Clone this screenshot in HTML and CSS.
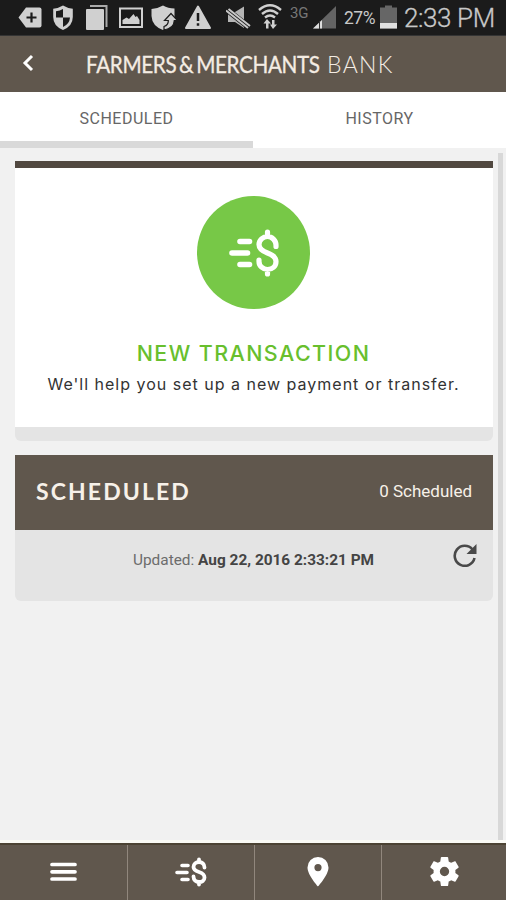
FILE: index.html
```html
<!DOCTYPE html>
<html lang="en">
<head>
<meta charset="utf-8">
<title>Farmers &amp; Merchants Bank</title>
<link rel="stylesheet" href="styles.css">
</head>
<body>
<svg class="defs" width="0" height="0" aria-hidden="true">
  <symbol id="transfer" viewBox="0 0 50 48">
    <g fill="none" stroke="currentColor" stroke-linecap="round" stroke-linejoin="round">
      <path stroke-width="5.600" d="M11 12.500H20.500M3 24H18.500M11 35.500H20.500"/>
      <path stroke-width="5.200" d="M47 17.500V16C47 11.500 43 7.500 38.500 7.500S30 11.200 30 15.500C30 20 33 22 38.500 24S47 28.500 47 32.500C47 37.500 43 40.500 38.500 40.500S30 37 30 32.500V31M38.500 3V7.500M38.500 40.500V45"/>
    </g>
  </symbol>
</svg>
<header class="status">
  <svg class="st tag" width="24" height="36" viewBox="0 0 24 36"><path fill="#d0d0d0" d="M8 7.500H21.500Q23.500 7.500 23.500 9.500V25.500Q23.500 27.500 21.500 27.500H8L.5 17.500Z"/><path stroke="#1b1b1b" stroke-width="2.200" d="M8.500 17.500H18.500M13.500 12.500V22.500"/></svg>
  <svg class="st shield" width="20" height="36" viewBox="0 0 20 36"><path fill="#d0d0d0" d="M10 5.500Q15 8.500 19.800 8.700V17Q19.800 26 10 30Q.2 26 .2 17V8.700Q5 8.500 10 5.500Z"/><path fill="#1b1b1b" d="M10 9V17.500H3V11.300Q7 11 10 9ZM10 17.500H17Q16.500 24 10 27Z"/></svg>
  <svg class="st pages" width="22" height="36" viewBox="0 0 22 36"><path fill="none" stroke="#aaa" stroke-width="2" d="M4 6H20.500V27"/><rect y="9" width="18" height="21" rx="1" fill="#d0d0d0"/></svg>
  <svg class="st photo" width="24" height="36" viewBox="0 0 24 36"><rect x="1" y="8.500" width="22" height="18.500" fill="none" stroke="#d0d0d0" stroke-width="2"/><path fill="#d0d0d0" d="M3.500 24V20L7.500 17.500L10 19L14.500 14L16.500 17L18 16L20.500 20V24Z"/></svg>
  <svg class="st guard" width="27" height="36" viewBox="0 0 27 36"><path fill="#d0d0d0" d="M12 5.500Q17 8.500 23.500 8.500V17Q22 26 12 30Q1 26 .5 16V9Q7 8.500 12 5.500Z"/><path fill="#d0d0d0" stroke="#1b1b1b" stroke-width="1.200" d="M20 13.500L26.500 20.500H23.300Q23 28.500 13 30V26.500Q17.500 25 17.300 20.500H13.500Z"/></svg>
  <svg class="st alert" width="26" height="36" viewBox="0 0 26 36"><path fill="#d0d0d0" stroke="#d0d0d0" stroke-linejoin="round" stroke-width="2" d="M13 6.500L25 28H1Z"/><path stroke="#1b1b1b" stroke-width="2.500" d="M13 13V21M13 23.300V25.800"/></svg>
  <svg class="st mute" width="25" height="36" viewBox="0 0 25 36"><path fill="#b5b5b5" d="M2 12H9L18 6.500V28L9 22H2Z"/><path stroke="#1b1b1b" stroke-width="6" d="M0 9L24 28"/><path stroke="#c8c8c8" stroke-width="2" d="M0 10.500L22 28M2.500 9L24 26"/></svg>
  <svg class="st wifi" width="24" height="36" viewBox="0 0 24 36"><g fill="none" stroke="#d0d0d0" stroke-width="2.400"><path d="M1 10Q12 .5 23 10M4 14Q12 7 20 14M7 17.500Q12 13.500 17 17.500"/></g><path fill="#d0d0d0" d="M9 19L13 23.500H10.500V28.500H8V23.500H5.500ZM14 20H16.500V24.500H19L15 29L12 24.500H14Z"/></svg>
  <span class="net">3G</span>
  <svg class="st bars" width="23" height="36" viewBox="0 0 23 36"><path fill="#646464" d="M23 6V28.500H0Z"/><path fill="#ddd" d="M9 20V28.500H0Z"/><path stroke="#333" d="M6.500 21V29"/></svg>
  <span class="pct">27%</span>
  <svg class="st batt" width="17" height="36" viewBox="0 0 17 36"><path fill="#666" d="M5 5.500H12V7.500H17V28.500H0V7.500H5Z"/><path fill="#e0e0e0" d="M0 23H17V28.500H0Z"/></svg>
  <span class="clock">2:33 PM</span>
</header>
<nav class="brand">
  <svg class="back" width="12" height="18" viewBox="0 0 12 18"><path d="M10 2L3 9L10 16" fill="none" stroke="#fff" stroke-width="3"/></svg>
  <div class="logo"><span class="name">FARMERS<i>&amp;</i>MERCHANTS</span><span class="bank">BANK</span></div>
</nav>
<div class="tabs"><div class="tab on">SCHEDULED</div><div class="tab">HISTORY</div></div>
<main>
  <div class="content">
    <section class="new">
      <div class="disc"><svg width="50" height="48"><use href="#transfer"/></svg></div>
      <h2>NEW TRANSACTION</h2>
      <p>We'll help you set up a new payment or transfer.</p>
    </section>
    <section class="list">
      <div class="head"><h3>SCHEDULED</h3><span class="count">0 Scheduled</span></div>
      <div class="updated"><span class="when">Updated: <b>Aug 22, 2016 2:33:21 PM</b></span>
        <svg class="refresh" width="24" height="24" viewBox="0 0 24 24"><path d="M19.500 6.500A10 10 0 1 0 21.500 15" fill="none" stroke="#494949" stroke-width="2.600"/><path fill="#494949" d="M23.500 1V11H13.500Z"/></svg>
      </div>
    </section>
  </div>
  <div class="scroll"></div>
</main>
<footer>
  <div><svg width="27" height="20" viewBox="0 0 27 20"><path stroke="#fff" stroke-width="3.700" stroke-linecap="round" d="M2 2.500H25M2 9.800H25M2 17H25"/></svg></div>
  <div><svg width="32" height="30" viewBox="0 0 32 30"><g fill="none" stroke="#fff" stroke-linecap="round"><path stroke-width="3.600" d="M7 8.500H13M2 15.500H12M7 22.500H13"/><path stroke-width="3.800" d="M29.500 10.500C29.500 7 27 5 24 5S18.500 7 18.500 10C18.500 13 21 14 24 15S29.500 17.500 29.500 20.500S27 25 24 25S18.500 23 18.500 19.500M24 2.500V5M24 25V27.500"/></g></svg></div>
  <div><svg width="22" height="30" viewBox="0 0 22 30"><path fill="#fff" fill-rule="evenodd" d="M11 0A10.500 10.500 0 0 1 21.500 10.500C21.500 18 11 29.500 11 29.500S.5 18 .5 10.500A10.500 10.500 0 0 1 11 0ZM11 7A3.600 3.600 0 1 0 11 14.200A3.600 3.600 0 1 0 11 7Z"/></svg></div>
  <div><svg width="35" height="35" viewBox="0 0 24 24"><path fill="#fff" d="M19.430 12.980c.04-.32.07-.64.07-.98s-.03-.66-.07-.98l2.110-1.650c.19-.15.24-.42.12-.64l-2-3.460c-.12-.22-.39-.3-.61-.22l-2.490 1c-.52-.4-1.080-.73-1.690-.98l-.38-2.650C14.460 2.180 14.250 2 14 2h-4c-.25 0-.46.18-.49.42l-.38 2.650c-.61.25-1.170.59-1.690.98l-2.490-1c-.23-.09-.49 0-.61.22l-2 3.460c-.13.22-.07.49.12.64l2.110 1.650c-.04.32-.07.65-.07.98s.03.66.07.98l-2.110 1.650c-.19.15-.24.42-.12.64l2 3.460c.12.22.39.3.61.22l2.490-1c.52.4 1.080.73 1.690.98l.38 2.650c.03.24.24.42.49.42h4c.25 0 .46-.18.49-.42l.38-2.650c.61-.25 1.170-.59 1.690-.98l2.490 1c.23.09.49 0 .61-.22l2-3.460c.12-.22.07-.49-.12-.64l-2.110-1.650zM12 15.200a3.200 3.200 0 1 1 0-6.400 3.200 3.200 0 0 1 0 6.400z"/></svg></div>
</footer>
</body>
</html>
```
FILE: styles.css
```css
* { box-sizing: border-box; }
body { margin: 0; width: 506px; height: 900px; display: flex; flex-direction: column; background: #f1f1f1; font-family: Roboto, sans-serif; overflow: hidden; }
.defs { display: none; }
.status { height: 36px; background: #1b1b1b; display: flex; flex: none; color: #c8c8c8; white-space: nowrap; border-bottom: 1px solid #343434; }
.st { flex: none; }
.tag { margin-left: 18px; }
.shield { margin-left: 11px; }
.pages { margin-left: 13px; }
.photo { margin-left: 11px; }
.guard { margin-left: 8px; }
.alert { margin-left: 7px; }
.mute { margin-left: 15px; }
.wifi { margin-left: 7px; }
.net { width: 18px; margin-left: 8px; font-size: 15px; line-height: 26px; color: #777; letter-spacing: -.3px; }
.bars { margin-left: 5px; }
.pct { width: 31px; margin-left: 8px; font-size: 17.500px; line-height: 37px; letter-spacing: -.5px; }
.batt { margin-left: 5px; }
.clock { margin-left: 7px; font-size: 26px; line-height: 36px; font-weight: 300; letter-spacing: -.4px; -webkit-text-stroke: .3px #c8c8c8; }
.brand { height: 56px; background: #60574d; display: flex; flex: none; align-items: center; }
.back { margin-left: 22px; margin-top: -2px; }
.logo { margin-left: 52px; color: #f4ece3; font-family: Lato, sans-serif; font-size: 23px; line-height: 54px; display: flex; white-space: nowrap; }
.name { width: 241px; letter-spacing: -.4px; transform: scaleX(.9); transform-origin: left; -webkit-text-stroke: .3px #f4ece3; }
.name i { font-style: normal; margin: 0 3px; }
.bank { font-weight: 300; letter-spacing: 1.300px; }
.tabs { display: flex; height: 56px; flex: none; background: #fff; }
.tab { flex: 1; text-align: center; font-size: 16px; line-height: 53px; color: #666; letter-spacing: .5px; border-bottom: 7px solid #fff; }
.on { border-color: #d9d9d9; }
main { flex: 1; display: flex; padding-top: 5px; border-bottom: 3px solid #fafaf5; }
.content { width: 478px; margin-left: 15px; padding-top: 8px; }
.scroll { width: 5px; margin-left: 5px; background: #d8d8d8; }
section { border-radius: 0 0 6px 6px; overflow: hidden; }
.new { height: 280px; background: #fff; border-top: 7px solid #514840; border-bottom: 14px solid #e4e4e4; display: flex; flex-direction: column; align-items: center; padding-right: 1px; }
.disc { width: 113px; height: 113px; flex: none; border-radius: 50%; background: #77c847; color: #fff; display: flex; align-items: center; justify-content: center; margin-top: 28px; }
h2, h3, p { margin: 0; white-space: nowrap; }
h2 { margin-top: 27px; font: 500 21.500px/34px Inter, sans-serif; color: #68bf2d; letter-spacing: 1.400px; }
p { font: 400 16px/28px Inter, sans-serif; color: #333; letter-spacing: 1px; }
.list { margin-top: 14px; height: 146px; background: #e4e4e4; }
.head { height: 75px; background: #60574d; display: flex; justify-content: space-between; align-items: center; padding: 0 21px 4px; color: #f7f1e9; }
h3 { font: 700 23px/30px Lato, sans-serif; letter-spacing: 2.100px; }
.count { font-size: 17px; }
.updated { display: flex; height: 71px; padding: 13px 16px 0 118px; justify-content: space-between; color: #6c6c6c; font-size: 15.400px; line-height: 35px; white-space: nowrap; }
.updated b { color: #444; font-weight: 700; }
footer { height: 57px; flex: none; display: grid; grid-template-columns: 128px 127px 127px 1fr; background: #60574d; border-top: 2px solid #4c4334; color: #fff; }
footer div { display: flex; align-items: center; justify-content: center; border-right: 1px solid #91877d; padding-bottom: 2px; }
footer div:last-child { border: 0; }
```
